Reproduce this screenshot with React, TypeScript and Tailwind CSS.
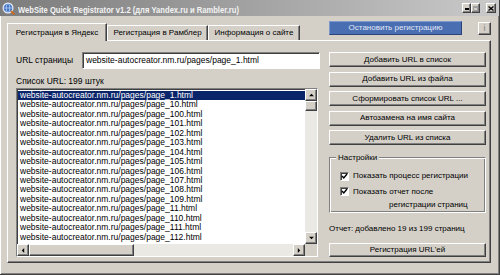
const urls = [
  "page_1",
  "page_10",
  "page_100",
  "page_101",
  "page_102",
  "page_103",
  "page_104",
  "page_105",
  "page_106",
  "page_107",
  "page_108",
  "page_109",
  "page_11",
  "page_110",
  "page_111",
  "page_112",
];

const raised =
  "border border-t-white border-l-white border-r-[#404040] border-b-[#404040] shadow-[inset_-1px_-1px_0_#808080]";
const sunken =
  "border border-t-[#808080] border-l-[#808080] border-r-white border-b-white shadow-[inset_1px_1px_0_#404040]";

const Button = ({ label, className = "" }: { label: string; className?: string }) => (
  <div
    className={`flex h-[15px] items-center justify-center bg-[#d4d0c8] text-[8px] text-black ${raised} ${className}`}
  >
    {label}
  </div>
);

const Check = ({ top }: { top?: boolean }) => (
  <div className={`flex h-[9px] w-[9px] shrink-0 items-center justify-center bg-white ${sunken} ${top ? "mt-[1px]" : ""}`}>
    <svg width="7" height="7" viewBox="0 0 7 7">
      <polyline points="1,3 2.8,5 6,1" fill="none" stroke="#000" strokeWidth="1.4" />
    </svg>
  </div>
);

const ArrowBtn = ({ dir }: { dir: "up" | "down" | "left" | "right" }) => {
  const pts = {
    up: "1,4 4,1 7,4",
    down: "1,1 4,4 7,1",
    left: "4,1 1,4 4,7",
    right: "1,1 4,4 1,7",
  }[dir];
  const vb = dir === "up" || dir === "down" ? "0 0 8 5" : "0 0 5 8";
  const sz = dir === "up" || dir === "down" ? { w: 7, h: 4 } : { w: 4, h: 7 };
  return (
    <div className={`flex h-[12px] w-[12px] shrink-0 items-center justify-center bg-[#d4d0c8] ${raised}`}>
      <svg width={sz.w} height={sz.h} viewBox={vb}>
        <polygon points={pts} fill="#000" />
      </svg>
    </div>
  );
};

export default function App() {
  return (
    <div className="flex h-[275px] w-[500px] flex-col overflow-hidden border-r border-b border-r-[#404040] border-b-[#404040] bg-[#d4d0c8] font-['Liberation_Sans',Arial,sans-serif] shadow-[inset_1px_0_0_white,inset_-1px_-1px_0_#808080]">
      {/* title bar */}
      <div className="flex h-[16px] shrink-0 items-center bg-gradient-to-r from-[#7c7c7c] via-[#a2a2a2] to-[#cacaca] pl-[2px] pr-[3px]">
        <svg width="13" height="13" viewBox="0 0 13 13" className="shrink-0">
          <circle cx="6" cy="6" r="5.5" fill="#e8eef8" />
          <circle cx="6" cy="6" r="4.3" fill="#3f73c4" />
          <ellipse cx="6" cy="6" rx="1.8" ry="4.3" fill="none" stroke="#b9d0f0" strokeWidth="0.8" />
          <line x1="1.8" y1="6" x2="10.2" y2="6" stroke="#b9d0f0" strokeWidth="0.8" />
          <line x1="9" y1="9" x2="12.3" y2="12.3" stroke="#d46a1c" strokeWidth="1.8" />
        </svg>
        <div className="ml-[3px] w-[252px] shrink-0">
          <span className="inline-block origin-left scale-x-80 whitespace-nowrap text-[9.5px] font-bold text-[#f4f4f4]">
            WebSite Quick Registrator v1.2 (для Yandex.ru и Rambler.ru)
          </span>
        </div>
        <div className="ml-auto flex items-center">
          <div className={`flex h-[10px] w-[9px] items-end justify-center bg-[#d4d0c8] pb-[2px] ${raised}`}>
            <div className="h-[2px] w-[4px] bg-black" />
          </div>
          <div className={`flex h-[10px] w-[9px] items-center justify-center bg-[#d4d0c8] ${raised}`}>
            <div className="h-[5px] w-[5px] border border-t-2 border-[#a0a0a0]" />
          </div>
          <div className={`ml-[6px] flex h-[10px] w-[10px] items-center justify-center bg-[#d4d0c8] ${raised}`}>
            <svg width="6" height="5" viewBox="0 0 6 5">
              <path d="M0.5 0.5 L5.5 4.5 M5.5 0.5 L0.5 4.5" stroke="#000" strokeWidth="1.3" />
            </svg>
          </div>
        </div>
      </div>

      {/* header row */}
      <div className="flex h-[24px] shrink-0 items-end pl-[7px] pr-[8px]">
        <div className="relative z-10 mb-[-1px] flex h-[18px] w-[100px] items-center justify-center border border-b-0 border-t-white border-l-white border-r-[#404040] bg-[#d4d0c8] text-[8px] shadow-[inset_-1px_0_0_#808080]">
          Регистрация в Яндекс
        </div>
        <div className="flex h-[15px] w-[101px] items-center justify-center border border-b-0 border-t-white border-l-white border-r-[#404040] text-[8px] shadow-[inset_-1px_0_0_#808080]">
          Регистрация в Рамблер
        </div>
        <div className="flex h-[15px] w-[92px] items-center justify-center border border-b-0 border-t-white border-l-white border-r-[#404040] text-[8px] shadow-[inset_-1px_0_0_#808080]">
          Информация о сайте
        </div>
        <div className="ml-auto flex self-start pt-[5px]">
          <div className="flex h-[14px] w-[133px] items-center justify-center border border-t-[#7c9ad0] border-l-[#7c9ad0] border-r-[#2a4478] border-b-[#2a4478] bg-[#4a6eb2] text-[8px] text-[#e2e9f7]">
            Остановить регистрацию
          </div>
          <div className={`ml-[16px] mt-[1px] flex h-[13px] w-[13px] items-center justify-center bg-[#d4d0c8] text-[9px] leading-none text-[#808080] ${raised}`}>
            i
          </div>
        </div>
      </div>

      {/* tab panel */}
      <div className={`ml-[7px] flex h-[223px] w-[484px] shrink-0 gap-[9px] bg-[#d4d0c8] pl-[8px] pt-[11px] ${raised}`}>
        {/* left column */}
        <div className="flex w-[304px] flex-col">
          <div className="flex h-[17px] items-center">
            <span className="w-[66px] text-[8.5px] text-black">URL страницы</span>
            <div className={`flex h-[17px] flex-1 items-center bg-white pl-[3px] text-[8.5px] text-black ${sunken}`}>
              website-autocreator.nm.ru/pages/page_1.html
            </div>
          </div>
          <div className="mt-[6px] h-[12px] text-[8.5px] leading-[12px] text-black">Список URL: 199 штук</div>
          <div className={`mt-[1px] flex h-[169px] w-[302px] flex-col bg-white ${sunken}`}>
            <div className="flex min-h-0 flex-1">
              <div className="flex-1 overflow-hidden pl-[1px] pt-[2px]">
                {urls.map((u, i) => (
                  <div
                    key={u}
                    className={`h-[9.45px] whitespace-nowrap pl-[2px] text-[8.5px] leading-[9.45px] ${
                      i === 0 ? "bg-[#0a246a] text-white" : "text-black"
                    }`}
                  >
                    website-autocreator.nm.ru/pages/{u}.html
                  </div>
                ))}
              </div>
              <div className="flex w-[12px] flex-col bg-[#ebe9e4]">
                <ArrowBtn dir="up" />
                <div className={`h-[10px] w-[12px] bg-[#d4d0c8] ${raised}`} />
                <div className="flex-1" />
                <ArrowBtn dir="down" />
              </div>
            </div>
            <div className="flex h-[12px] bg-[#ebe9e4]">
              <ArrowBtn dir="left" />
              <div className={`h-[12px] w-[105px] bg-[#d4d0c8] ${raised}`} />
              <div className="flex-1" />
              <ArrowBtn dir="right" />
              <div className="w-[12px] bg-[#d4d0c8]" />
            </div>
          </div>
        </div>

        {/* right column */}
        <div className="flex w-[157px] flex-col">
          <div className="flex flex-col gap-[4.5px]">
            <Button label="Добавить URL в список" />
            <Button label="Добавить URL из файла" />
            <Button label="Сформировать список URL ..." />
            <Button label="Автозамена на имя сайта" />
            <Button label="Удалить URL из списка" />
          </div>
          <div className="relative mt-[12px] h-[56px] border border-t-[#808080] border-l-[#808080] border-r-white border-b-white shadow-[inset_1px_1px_0_white,inset_-1px_-1px_0_#808080]">
            <span className="absolute left-[6px] top-[-6px] bg-[#d4d0c8] px-[2px] text-[8px] leading-[11px] text-black">
              Настройки
            </span>
            <div className="flex flex-col pl-[10px] pt-[13px]">
              <div className="flex items-center gap-[4px]">
                <Check />
                <span className="text-[8px] leading-[10px] text-black">Показать процесс регистрации</span>
              </div>
              <div className="mt-[5px] flex items-start gap-[4px]">
                <Check top />
                <div className="flex flex-col text-[8px] leading-[12.5px] text-black">
                  <span>Показать отчет после</span>
                  <span className="pl-[36px]">регистрации страниц</span>
                </div>
              </div>
            </div>
          </div>
          <div className="mt-[10px] h-[12px] text-[8px] leading-[12px] text-black">
            Отчет: добавлено 19 из 199 страниц
          </div>
          <Button label="Регистрация URL'ей" className="mt-[8px] !h-[14px]" />
        </div>
      </div>
    </div>
  );
}
